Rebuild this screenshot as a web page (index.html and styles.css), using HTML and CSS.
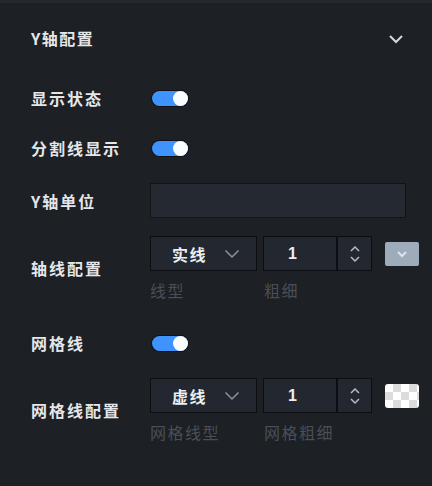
FILE: index.html
```html
<!DOCTYPE html>
<html lang="zh">
<head>
<meta charset="utf-8">
<link rel="stylesheet" href="styles.css">
</head>
<body>
<div class="panel">
  <div class="header">
    <span class="title">Y轴配置</span>
    <svg class="collapse" width="16" height="10" viewBox="0 0 16 10"><path d="M2 2 L8 8 L14 2" fill="none" stroke="#d4d7db" stroke-width="2"/></svg>
  </div>

  <div class="row r1">
    <div class="label">显示状态</div>
    <div class="toggle"><span class="knob"></span></div>
  </div>

  <div class="row r2">
    <div class="label">分割线显示</div>
    <div class="toggle"><span class="knob"></span></div>
  </div>

  <div class="row r3">
    <div class="label">Y轴单位</div>
    <div class="text-input"></div>
  </div>

  <div class="row r4">
    <div class="label">轴线配置</div>
    <div class="group">
      <div class="controls">
        <div class="select"><span class="sel-text">实线</span>
          <svg width="16" height="10" viewBox="0 0 16 10"><path d="M1.5 1.5 L8 8 L14.5 1.5" fill="none" stroke="#8d939b" stroke-width="1.5"/></svg>
        </div>
        <div class="number">
          <span class="num-val">1</span>
          <span class="steps">
            <svg width="12" height="20" viewBox="0 0 12 20"><path d="M2 7 L6 3 L10 7" fill="none" stroke="#b9bdc3" stroke-width="1.5"/><path d="M2 13 L6 17 L10 13" fill="none" stroke="#b9bdc3" stroke-width="1.5"/></svg>
          </span>
        </div>
        <div class="swatch solid">
          <svg width="12" height="8" viewBox="0 0 12 8"><path d="M2 2 L6 6 L10 2" fill="none" stroke="#dfe4ea" stroke-width="2"/></svg>
        </div>
      </div>
      <div class="sublabels">
        <span class="sub s1">线型</span>
        <span class="sub">粗细</span>
      </div>
    </div>
  </div>

  <div class="row r5">
    <div class="label">网格线</div>
    <div class="toggle"><span class="knob"></span></div>
  </div>

  <div class="row r6">
    <div class="label">网格线配置</div>
    <div class="group">
      <div class="controls">
        <div class="select"><span class="sel-text">虚线</span>
          <svg width="16" height="10" viewBox="0 0 16 10"><path d="M1.5 1.5 L8 8 L14.5 1.5" fill="none" stroke="#8d939b" stroke-width="1.5"/></svg>
        </div>
        <div class="number">
          <span class="num-val">1</span>
          <span class="steps">
            <svg width="12" height="20" viewBox="0 0 12 20"><path d="M2 7 L6 3 L10 7" fill="none" stroke="#b9bdc3" stroke-width="1.5"/><path d="M2 13 L6 17 L10 13" fill="none" stroke="#b9bdc3" stroke-width="1.5"/></svg>
          </span>
        </div>
        <div class="swatch checker"></div>
      </div>
      <div class="sublabels">
        <span class="sub s1">网格线型</span>
        <span class="sub">网格粗细</span>
      </div>
    </div>
  </div>
</div>
</body>
</html>
```

FILE: styles.css
```css
html, body {
  margin: 0;
  padding: 0;
  background: #1d2025;
  width: 432px;
  height: 486px;
  overflow: hidden;
}

.panel {
  border-top: 3px solid #25292f;
  font-family: "Noto Sans CJK SC", "Liberation Sans", sans-serif;
  color: #e4e6e9;
  padding-left: 31px;
  padding-right: 13px;
}

.header {
  height: 69px;
  display: flex;
  align-items: center;
  justify-content: space-between;
  padding-right: 15px;
}

.title {
  font-size: 16px;
  font-weight: 700;
  letter-spacing: 1.5px;
}

.collapse {
  margin-top: 2px;
}

.row {
  display: flex;
  align-items: center;
}

.label {
  width: 119px;
  flex: none;
  font-size: 16px;
  font-weight: 700;
  letter-spacing: 2px;
  line-height: 20px;
}

.r1 { height: 24px; margin-top: 14px; }
.r2 { height: 24px; margin-top: 26px; }
.r3 { height: 35px; margin-top: 23px; }
.r4 { margin-top: 18px; }
.r5 { height: 24px; margin-top: 31px; }
.r6 { margin-top: 23px; }

.toggle {
  width: 36px;
  height: 15px;
  border-radius: 8px;
  background: #3e94fc;
  box-shadow: 0 0 0 1px #101216;
  display: flex;
  justify-content: flex-end;
  align-items: center;
  margin-left: 2px;
}

.knob {
  width: 15px;
  height: 15px;
  border-radius: 50%;
  background: #fbfcfd;
}

.text-input {
  width: 254px;
  height: 33px;
  background: #252a32;
  border: 1px solid #121418;
}

.group {
  display: flex;
  flex-direction: column;
  gap: 9px;
}

.controls {
  display: flex;
  align-items: center;
}

.select {
  height: 33px;
  background: #232830;
  border: 1px solid #0c0e11;
  display: flex;
  align-items: center;
  padding-left: 21px;
  width: 84px;
}

.sel-text {
  font-size: 16px;
  font-weight: 700;
  letter-spacing: 1.5px;
  color: #eceef0;
  width: 52px;
}

.number {
  margin-left: 6px;
  width: 107px;
  height: 33px;
  background: #232830;
  border: 1px solid #0c0e11;
  display: flex;
  align-items: stretch;
}

.num-val {
  flex: 1;
  display: flex;
  align-items: center;
  padding-left: 24px;
  font-family: "Liberation Sans", sans-serif;
  font-size: 16px;
  font-weight: 700;
  color: #eceef0;
  border-right: 2px solid #0c0e11;
}

.steps {
  width: 33px;
  display: flex;
  align-items: center;
  justify-content: center;
}

.swatch {
  margin-left: 13px;
  width: 34px;
  height: 24px;
  border-radius: 2px;
}

.solid {
  background: #9eabba;
  display: flex;
  align-items: center;
  justify-content: center;
}

.checker {
  border-radius: 3px;
  background-color: #ffffff;
  background-image:
    linear-gradient(45deg, #dcdcdc 25%, transparent 25%, transparent 75%, #dcdcdc 75%),
    linear-gradient(45deg, #dcdcdc 25%, transparent 25%, transparent 75%, #dcdcdc 75%);
  background-size: 16px 16px;
  background-position: 0 0, 8px 8px;
}

.sublabels {
  display: flex;
  line-height: 20px;
}

.sub {
  font-size: 16px;
  letter-spacing: 1.5px;
  color: #4a4f57;
}

.s1 {
  width: 114px;
}
```
